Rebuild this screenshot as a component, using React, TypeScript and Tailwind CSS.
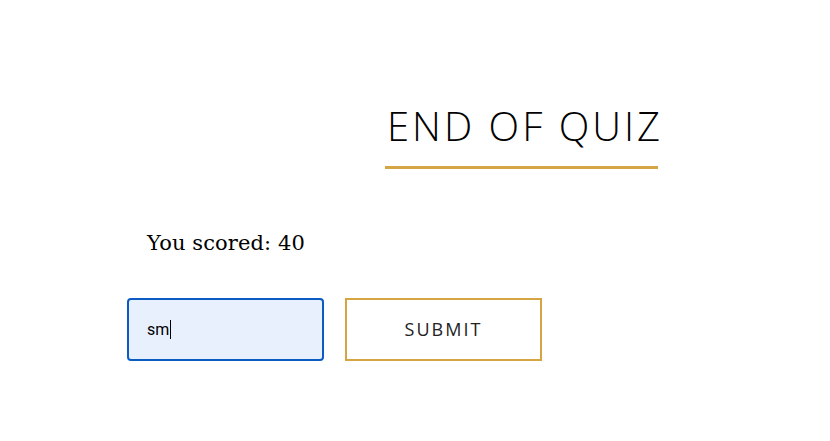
import React from "react";

export default function App() {
  return (
    <div className="w-[830px] h-[441px] bg-white overflow-hidden">
      <div className="pt-[102px] pl-[385px]">
        <div className="inline-block">
          <h1
            className="text-[40px] leading-[48px] font-light text-black tracking-[3px] pl-[2px] whitespace-nowrap"
            style={{ fontFamily: '"Open Sans", sans-serif' }}
          >
            END OF QUIZ
          </h1>
          <div className="h-[3px] bg-[#d3a544] mt-[16px] w-[273px]" />
        </div>
      </div>
      <p
        className="mt-[62px] ml-[147px] text-[21px] leading-[24px] text-black tracking-[0.1px]"
        style={{ fontFamily: '"DejaVu Serif", serif' }}
      >
        You scored: 40
      </p>
      <div className="mt-[43px] ml-[127px] flex gap-[21px]">
        <div className="w-[197px] h-[63px] border-2 border-[#0b5cc2] rounded-[4px] bg-[#e8f0fe] flex items-center pl-[18px]">
          <span
            className="text-[16px] text-black"
            style={{ fontFamily: '"Roboto", sans-serif' }}
          >
            sm
          </span>
          <span className="w-px h-[19px] bg-black ml-px" />
        </div>
        <button
          className="w-[197px] h-[63px] border-2 border-[#d4a542] bg-white flex items-center justify-center text-[18px] tracking-[2px] text-[#222]"
          style={{ fontFamily: '"Open Sans", sans-serif' }}
        >
          SUBMIT
        </button>
      </div>
    </div>
  );
}
